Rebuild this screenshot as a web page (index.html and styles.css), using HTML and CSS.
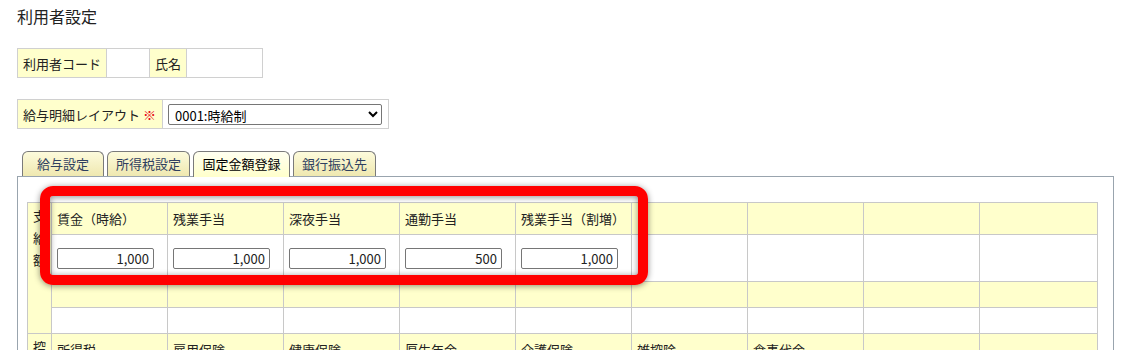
FILE: index.html
```html
<!DOCTYPE html>
<html lang="ja">
<head>
<meta charset="utf-8">
<title>利用者設定</title>
<link rel="stylesheet" href="styles.css">
</head>
<body>
<div class="page">
  <h1 class="title">利用者設定</h1>

  <table class="info">
    <tr>
      <th class="w-code">利用者コード</th>
      <td class="w-codev"></td>
      <th class="w-name">氏名</th>
      <td class="w-namev"></td>
    </tr>
  </table>

  <table class="info layout">
    <tr>
      <th class="w-layout">給与明細レイアウト <span class="req">※</span></th>
      <td class="w-select">
        <select class="sel">
          <option>0001:時給制</option>
        </select>
      </td>
    </tr>
  </table>

  <div class="tabs">
    <div class="tab t1">給与設定</div>
    <div class="tab t2">所得税設定</div>
    <div class="tab t3 active">固定金額登録</div>
    <div class="tab t4">銀行振込先</div>
  </div>

  <div class="panel">
    <table class="grid">
      <colgroup>
        <col class="c0">
        <col class="cw"><col class="cw"><col class="cw"><col class="cw"><col class="cw">
        <col class="cw"><col class="cw"><col class="cw"><col class="cl">
      </colgroup>
      <tr class="hrow">
        <th class="side" rowspan="4">支<br>給<br>額</th>
        <th>賃金（時給）</th>
        <th>残業手当</th>
        <th>深夜手当</th>
        <th>通勤手当</th>
        <th>残業手当（割増）</th>
        <th></th><th></th><th></th><th></th>
      </tr>
      <tr class="irow">
        <td><input class="num" type="text" value="1,000"></td>
        <td><input class="num" type="text" value="1,000"></td>
        <td><input class="num" type="text" value="1,000"></td>
        <td><input class="num" type="text" value="500"></td>
        <td><input class="num" type="text" value="1,000"></td>
        <td></td><td></td><td></td><td></td>
      </tr>
      <tr class="erow y">
        <th></th><th></th><th></th><th></th><th></th><th></th><th></th><th></th><th></th>
      </tr>
      <tr class="erow">
        <td></td><td></td><td></td><td></td><td></td><td></td><td></td><td></td><td></td>
      </tr>
      <tr class="hrow">
        <th class="side" rowspan="2">控<br>除<br>額</th>
        <th>所得税</th>
        <th>雇用保険</th>
        <th>健康保険</th>
        <th>厚生年金</th>
        <th>介護保険</th>
        <th>雑控除</th>
        <th>食事代金</th>
        <th></th><th></th>
      </tr>
      <tr class="irow">
        <td></td><td></td><td></td><td></td><td></td><td></td><td></td><td></td><td></td>
      </tr>
    </table>
    <div class="highlight"></div>
  </div>
</div>
</body>
</html>
```

FILE: styles.css
```css
html, body {
  margin: 0;
  padding: 0;
  background: #fff;
}
body {
  font-family: "Noto Sans CJK JP", "Noto Sans", sans-serif;
  color: #222;
  font-size: 13px;
}
.page {
  padding: 4px 0 0 17px;
}
.title {
  margin: 0 0 20px 0;
  font-size: 16px;
  font-weight: normal;
  line-height: 24px;
  height: 24px;
}
.info {
  border-collapse: collapse;
  margin-bottom: 21px;
}
.info th, .info td {
  border: 1px solid #d0d0d0;
  height: 29px;
  padding: 0 5px;
  box-sizing: border-box;
  font-weight: normal;
  text-align: left;
  white-space: nowrap;
}
.info th {
  background: #ffffcc;
}
.info.layout {
  margin-bottom: 22px;
}
.w-code { width: 89px; }
.w-codev { width: 43px; }
.w-name { width: 37px; }
.w-namev { width: 76px; }
.w-layout { width: 145px; }
.w-select { width: 226px; }
.req {
  color: #e60012;
}
.sel {
  width: 214px;
  height: 21px;
  font-family: inherit;
  font-size: 13px;
  border: 1px solid #767676;
  border-radius: 2px;
  background: #fff;
  color: #000;
  padding: 0 2px;
  display: block;
}
.tabs {
  display: flex;
  gap: 3px;
  margin-left: 5px;
  height: 25px;
  align-items: flex-end;
}
.tab {
  box-sizing: border-box;
  height: 25px;
  border: 1px solid #7a7a7a;
  border-bottom: none;
  border-radius: 6px 6px 0 0;
  background: linear-gradient(#fdfbdc, #efe8b0);
  color: #2f3f5f;
  text-align: center;
  line-height: 24px;
  font-size: 13px;
}
.tab.active {
  height: 26px;
  background: linear-gradient(#fffff0, #ffffcc);
  color: #000;
  margin-bottom: -1px;
  position: relative;
  z-index: 1;
}
.t1 { width: 82px; }
.t2 { width: 83px; }
.t3 { width: 97px; }
.t4 { width: 83px; }
.panel {
  position: relative;
  width: 1097px;
  box-sizing: border-box;
  border: 1px solid #99a4ae;
  border-bottom: none;
  padding: 25px 0 0 9px;
  height: 200px;
}
.grid {
  border-collapse: collapse;
  table-layout: fixed;
  width: 1070px;
}
.c0 { width: 24px; }
.cw { width: 116px; }
.cl { width: 118px; }
.grid th, .grid td {
  border: 1px solid #c8c8c8;
  padding: 0 5px;
  text-align: left;
  font-weight: normal;
  white-space: nowrap;
  overflow: hidden;
}
.grid th {
  background: #ffffcc;
}
.hrow th {
  height: 31px;
}
.irow td {
  height: 46px;
}
.erow th, .erow td {
  height: 25px;
}
.grid th.side {
  padding: 2px 0 0 5px;
  vertical-align: top;
  line-height: 22px;
}
.num {
  box-sizing: border-box;
  width: 97px;
  height: 21px;
  border: 1px solid #767676;
  border-radius: 2px;
  text-align: right;
  font-family: inherit;
  font-size: 13px;
  color: #222;
  padding: 0 4px;
  display: block;
}
.highlight {
  position: absolute;
  left: 22px;
  top: 9px;
  width: 608px;
  height: 99px;
  box-sizing: border-box;
  border: 10px solid #ff0000;
  border-radius: 13px;
  box-shadow: 0 1px 6px rgba(0, 0, 0, 0.45), inset 0 1px 6px rgba(0, 0, 0, 0.45);
  pointer-events: none;
}
```
